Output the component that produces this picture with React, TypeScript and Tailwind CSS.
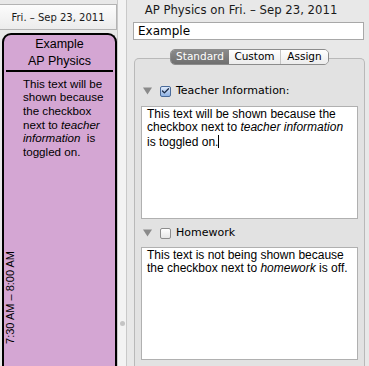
import { Check } from 'lucide-react';

const ui = { fontFamily: '"DejaVu Sans", "Liberation Sans", sans-serif' };
const helv = { fontFamily: '"Liberation Sans", Arial, sans-serif' };

function Disclosure() {
  return (
    <svg width="9" height="8" viewBox="0 0 9 8" className="shrink-0">
      <path d="M0 0.5 L9 0.5 L4.5 7.5 Z" fill="#8a8a8a" />
    </svg>
  );
}

function CheckBox({ checked }: { checked: boolean }) {
  return (
    <div
      className={`w-[11px] h-[11px] rounded-[2px] border flex items-center justify-center shrink-0 ${
        checked
          ? 'border-[#4a6b9a] bg-gradient-to-b from-[#dfeafa] to-[#8fb2e3]'
          : 'border-[#8d8d8d] bg-gradient-to-b from-white to-[#e6e6e6]'
      }`}
    >
      {checked && <Check className="w-[10px] h-[10px] text-[#1a2a44]" strokeWidth={3.5} />}
    </div>
  );
}

export default function App() {
  return (
    <div className="flex w-[369px] h-[366px] overflow-hidden bg-[#e8e8e8] text-black">
      {/* day column */}
      <div className="w-[117px] flex flex-col shrink-0">
        <div
          className="mt-[4px] h-[26px] border-y border-r border-[#b3b3b3] bg-gradient-to-b from-[#fcfcfc] to-[#ececec] flex items-center justify-center text-[10px] text-[#1a1a1a]"
          style={ui}
        >
          Fri. – Sep 23, 2011
        </div>
        <div
          className="mt-[3px] ml-[2px] flex-1 rounded-t-[9px] border-2 border-b-0 border-black bg-[#d4a6d3] flex flex-col"
          style={helv}
        >
          <div className="text-center text-[12.5px] leading-[17px] mt-[1px]">Example</div>
          <div className="text-center text-[12.5px] leading-[17px]">AP Physics</div>
          <div className="mx-[2px] h-[1.5px] bg-black" />
          <div className="flex flex-1">
            <div className="w-[15px] flex items-end pb-[22px]">
              <span className="[writing-mode:vertical-rl] rotate-180 text-[11px] leading-[12px] pl-[1px] whitespace-nowrap">
                7:30 AM – 8:00 AM
              </span>
            </div>
            <p className="w-[90px] text-[11.6px] leading-[13.7px] mt-[5px] pl-[4px]">
              This text will be shown because the checkbox next to <i>teacher</i> <i>information</i>&nbsp; is toggled on.
            </p>
          </div>
        </div>
      </div>

      {/* splitter */}
      <div className="w-[10px] shrink-0 border-x border-[#c9c9c9] bg-[#f3f3f3] flex flex-col items-center pt-[321px]">
        <div className="w-[5px] h-[5px] rounded-full bg-[#c4c4c4]" />
      </div>

      {/* inspector */}
      <div className="flex-1 flex flex-col pl-[6px] pr-[4px]" style={ui}>
        <div className="h-[22px] flex items-center justify-center pr-[16px] text-[11.7px] text-[#1a1a1a]">
          AP Physics on Fri. – Sep 23, 2011
        </div>
        <div className="h-[18px] bg-white border border-[#a8a8a8] flex items-center pl-[4px] text-[12px] mr-[1px]">
          Example
        </div>
        <div className="relative mt-[18px] ml-[1px] flex-1 rounded-t-[5px] border border-b-0 border-[#b9b9b9] bg-[#e2e2e2] flex flex-col px-[6px]">
          <div className="absolute -top-[10px] left-[35px] flex h-[16px] rounded-[5px] border border-[#8c8c8c] overflow-hidden text-[10.5px]">
            <div className="w-[58px] flex items-center justify-center bg-gradient-to-b from-[#8b8b8b] to-[#6f6f6f] text-white">
              Standard
            </div>
            <div className="w-[52px] flex items-center justify-center bg-gradient-to-b from-white to-[#ececec] border-r border-[#c4c4c4]">
              Custom
            </div>
            <div className="w-[47px] flex items-center justify-center bg-gradient-to-b from-white to-[#ececec]">
              Assign
            </div>
          </div>

          <div className="flex items-center mt-[26px] ml-[2px] h-[12px] text-[11px]">
            <Disclosure />
            <div className="ml-[8px]">
              <CheckBox checked />
            </div>
            <span className="ml-[5px]">Teacher Information:</span>
          </div>
          <div className="mt-[9px] h-[113px] bg-white border border-[#b0b0b0] px-[5px] pt-[1px]" style={helv}>
            <p className="text-[12px] leading-[13.3px]">
              This text will be shown because the checkbox next to <i>teacher information</i> is toggled on.
              <span className="inline-block w-px h-[13px] bg-black align-[-2px]" />
            </p>
          </div>

          <div className="flex items-center mt-[8px] ml-[2px] h-[12px] text-[11px]">
            <Disclosure />
            <div className="ml-[8px]">
              <CheckBox checked={false} />
            </div>
            <span className="ml-[5px]">Homework</span>
          </div>
          <div className="mt-[8px] h-[113px] bg-white border border-[#b0b0b0] px-[5px] pt-[1px]" style={helv}>
            <p className="text-[12px] leading-[13.3px]">
              This text is not being shown because the checkbox next to <i>homework</i> is off.
            </p>
          </div>
        </div>
      </div>
    </div>
  );
}
